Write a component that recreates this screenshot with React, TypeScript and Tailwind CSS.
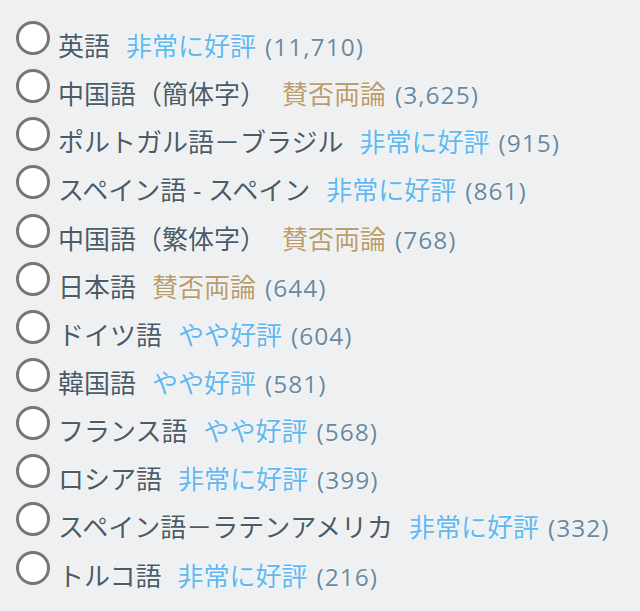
import React from 'react';

type Rating = 'positive' | 'mixed' | 'mostly';

interface Lang {
  name: string;
  rating: Rating;
  count: string;
}

const LANGS: Lang[] = [
  { name: '英語', rating: 'positive', count: '11,710' },
  { name: '中国語（簡体字）', rating: 'mixed', count: '3,625' },
  { name: 'ポルトガル語－ブラジル', rating: 'positive', count: '915' },
  { name: 'スペイン語 - スペイン', rating: 'positive', count: '861' },
  { name: '中国語（繁体字）', rating: 'mixed', count: '768' },
  { name: '日本語', rating: 'mixed', count: '644' },
  { name: 'ドイツ語', rating: 'mostly', count: '604' },
  { name: '韓国語', rating: 'mostly', count: '581' },
  { name: 'フランス語', rating: 'mostly', count: '568' },
  { name: 'ロシア語', rating: 'positive', count: '399' },
  { name: 'スペイン語－ラテンアメリカ', rating: 'positive', count: '332' },
  { name: 'トルコ語', rating: 'positive', count: '216' },
];

const RATING_TEXT: Record<Rating, string> = {
  positive: '非常に好評',
  mixed: '賛否両論',
  mostly: 'やや好評',
};

const RATING_CLASS: Record<Rating, string> = {
  positive: 'text-[#5fb8f0]',
  mixed: 'text-[#b99d6a]',
  mostly: 'text-[#5fb8f0]',
};

export default function App() {
  return (
    <div
      className="w-[640px] h-[611px] bg-[#eff0f2] pt-[21px] pl-[16px] overflow-hidden"
      style={{ fontFamily: '"Open Sans", "Noto Sans CJK JP", sans-serif' }}
    >
      {LANGS.map((l) => (
        <label key={l.name} className="flex items-start h-[48.15px] cursor-pointer">
          <span className="shrink-0 w-[34px] h-[34px] rounded-full bg-white border-[3px] border-[#767676]" />
          <span className="ml-[8px] mt-[2px] text-[26px] leading-[46px] whitespace-nowrap [text-shadow:0_0_2px_#ffffff]">
            <span className="text-[#4b5b68]">{l.name}</span>
            <span className={`ml-[16px] ${RATING_CLASS[l.rating]}`}>{RATING_TEXT[l.rating]}</span>
            <span className="ml-[9px] text-[24.5px] text-[#6889a0] tracking-[1px]">({l.count})</span>
          </span>
        </label>
      ))}
    </div>
  );
}
